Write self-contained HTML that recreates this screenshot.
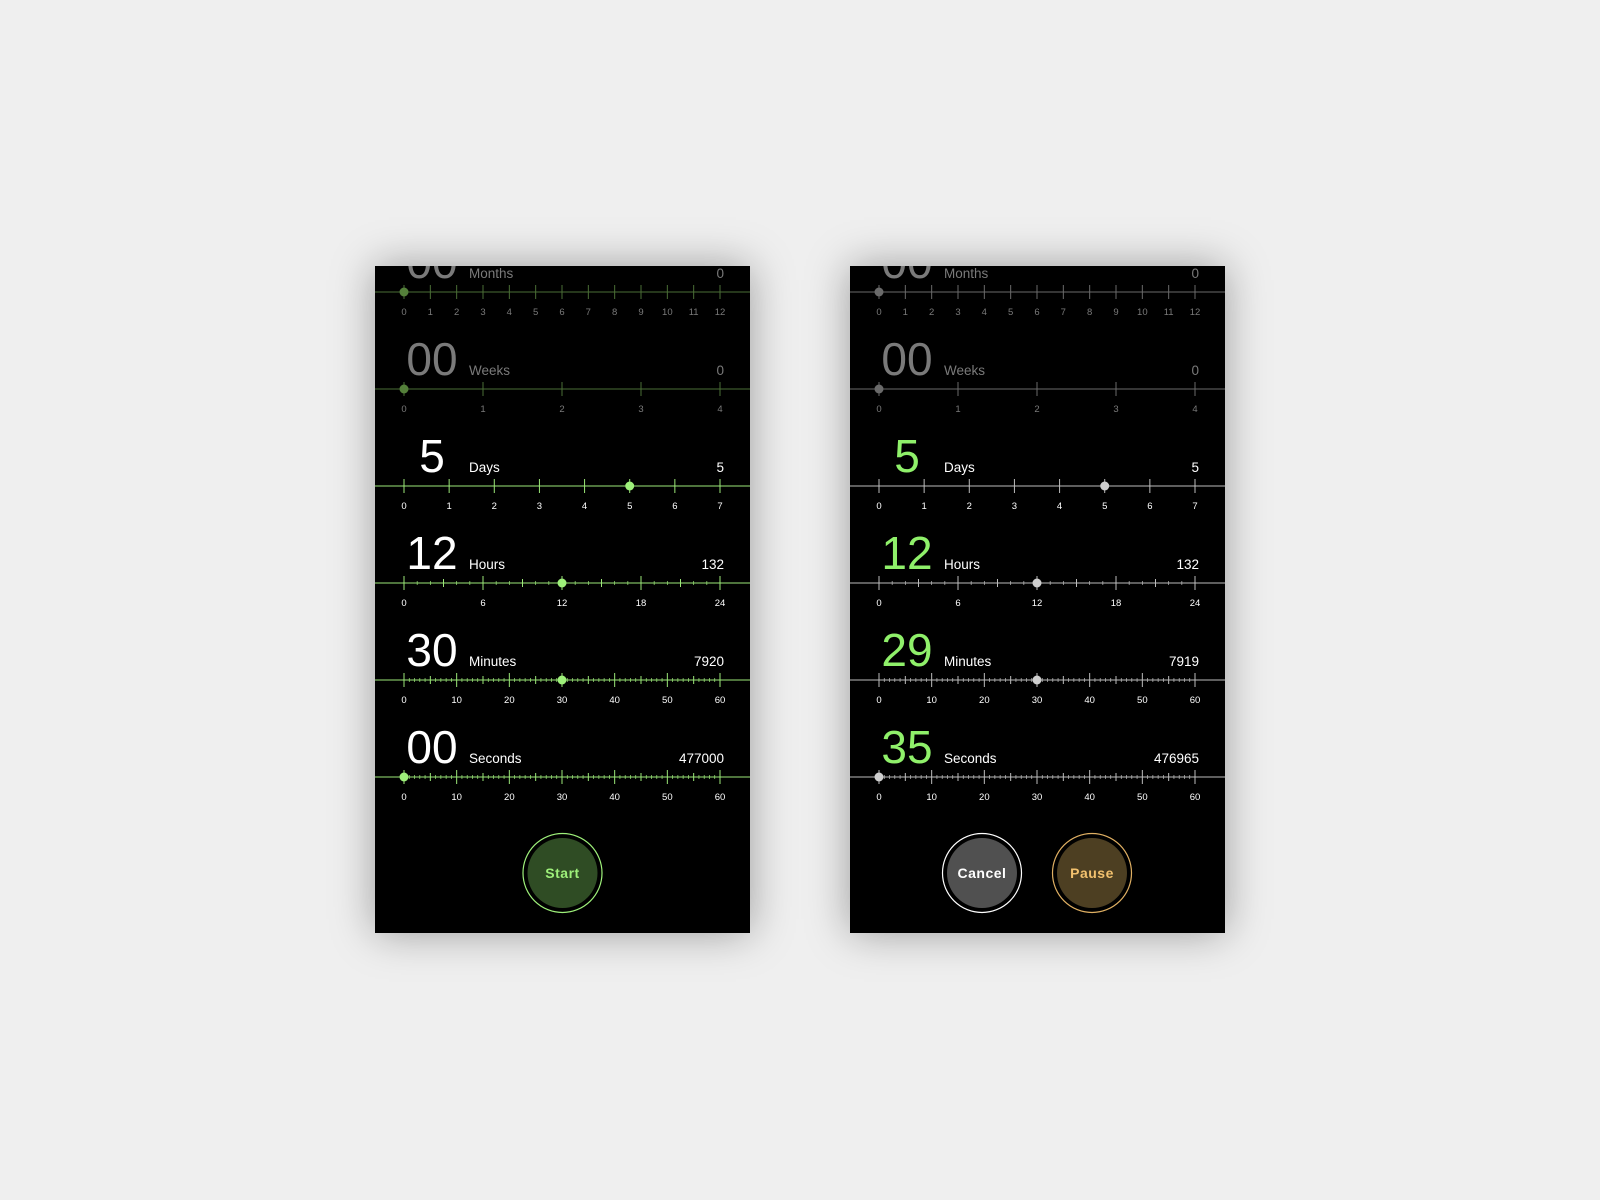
<!DOCTYPE html>
<html><head><meta charset="utf-8"><style>
html,body{margin:0;padding:0;width:1600px;height:1200px;background:#efefef;overflow:hidden;font-family:"Liberation Sans",sans-serif}
.p{position:absolute;top:266px;width:375px;height:667px;background:#000;box-shadow:0 0 40px rgba(0,0,0,0.35);overflow:hidden}
svg{position:absolute;left:0;top:0}
</style></head><body>
<div class="p" id="L" style="left:375px"></div>
<div class="p" id="R" style="left:850px"></div>
<script>
function build(el,cfg){
  var s='<svg width="375" height="667" xmlns="http://www.w3.org/2000/svg" font-family="Liberation Sans, sans-serif">';
  var rows=[
   {n:'Months',max:12,maj:1,mid:0,min:0,y:26},
   {n:'Weeks',max:4,maj:1,mid:0,min:0,y:123},
   {n:'Days',max:7,maj:1,mid:0,min:0,y:220},
   {n:'Hours',max:24,maj:6,mid:3,min:1,y:317},
   {n:'Minutes',max:60,maj:10,mid:5,min:1,y:414},
   {n:'Seconds',max:60,maj:10,mid:5,min:1,y:511}];
  rows.forEach(function(r,i){
    var c=cfg.rows[i];
    var x0=29,x1=345,w=x1-x0,y=r.y;
    s+='<line x1="0" x2="375" y1="'+y+'" y2="'+y+'" stroke="'+c.line+'" stroke-width="1"/>';
    for(var v=0;v<=r.max;v++){
      var x=x0+w*v/r.max,h,sw=1;
      if(v%r.maj==0)h=7;else if(r.mid&&v%r.mid==0)h=4;else {h=2;sw=0.7;}
      s+='<line x1="'+x+'" x2="'+x+'" y1="'+(y-h)+'" y2="'+(y+h)+'" stroke="'+c.line+'" stroke-width="'+sw+'"/>';
      if(v%r.maj==0)s+='<text x="'+x+'" y="'+(y+23)+'" font-size="9.5" fill="'+c.lab+'" text-anchor="middle">'+v+'</text>';
    }
    var dx=x0+w*c.dot/r.max;
    s+='<circle cx="'+dx+'" cy="'+y+'" r="4.5" fill="'+c.dc+'"/>';
    s+='<text x="57" y="'+(y-14)+'" font-size="46" fill="'+c.num+'" text-anchor="middle">'+c.v+'</text>';
    s+='<text x="94" y="'+(y-14)+'" font-size="13.5" fill="'+c.lab+'">'+r.n+'</text>';
    s+='<text x="349" y="'+(y-14)+'" font-size="13.5" fill="'+c.lab+'" text-anchor="end">'+c.t+'</text>';
  });
  cfg.btns.forEach(function(b){
    s+='<circle cx="'+b.x+'" cy="607" r="39.5" fill="none" stroke="'+b.ring+'" stroke-width="1.2"/>';
    s+='<circle cx="'+b.x+'" cy="607" r="35" fill="'+b.fill+'"/>';
    s+='<text x="'+b.x+'" y="612" font-size="14" font-weight="bold" fill="'+b.tc+'" text-anchor="middle" letter-spacing="0.5">'+b.t+'</text>';
  });
  el.innerHTML=s+'</svg>';
}
var dg={line:'#4a6e36',lab:'#7a7a7a',num:'#7a7a7a',dc:'#54803a'};
var lg={line:'#9be878',lab:'#ffffff',num:'#ffffff',dc:'#9ef07a'};
function o(a,b){var r={};for(var k in a)r[k]=a[k];for(var k in b)r[k]=b[k];return r;}
build(document.getElementById('L'),{rows:[
 o(dg,{v:'00',t:'0',dot:0}),o(dg,{v:'00',t:'0',dot:0}),
 o(lg,{v:'5',t:'5',dot:5}),o(lg,{v:'12',t:'132',dot:12}),
 o(lg,{v:'30',t:'7920',dot:30}),o(lg,{v:'00',t:'477000',dot:0})],
 btns:[{x:187.5,ring:'#9ef07a',fill:'#2f4c24',tc:'#9ef07a',t:'Start'}]});
var gg={line:'#6a6a6a',lab:'#7a7a7a',num:'#7a7a7a',dc:'#6a6a6a'};
var wg={line:'#bdbdbd',lab:'#ffffff',num:'#8ff06a',dc:'#cfcfcf'};
build(document.getElementById('R'),{rows:[
 o(gg,{v:'00',t:'0',dot:0}),o(gg,{v:'00',t:'0',dot:0}),
 o(wg,{v:'5',t:'5',dot:5}),o(wg,{v:'12',t:'132',dot:12}),
 o(wg,{v:'29',t:'7919',dot:30}),o(wg,{v:'35',t:'476965',dot:0})],
 btns:[{x:132,ring:'#ffffff',fill:'#505050',tc:'#ffffff',t:'Cancel'},
       {x:242,ring:'#e0b063',fill:'#4d3f22',tc:'#f2c16e',t:'Pause'}]});
</script>
</body></html>
